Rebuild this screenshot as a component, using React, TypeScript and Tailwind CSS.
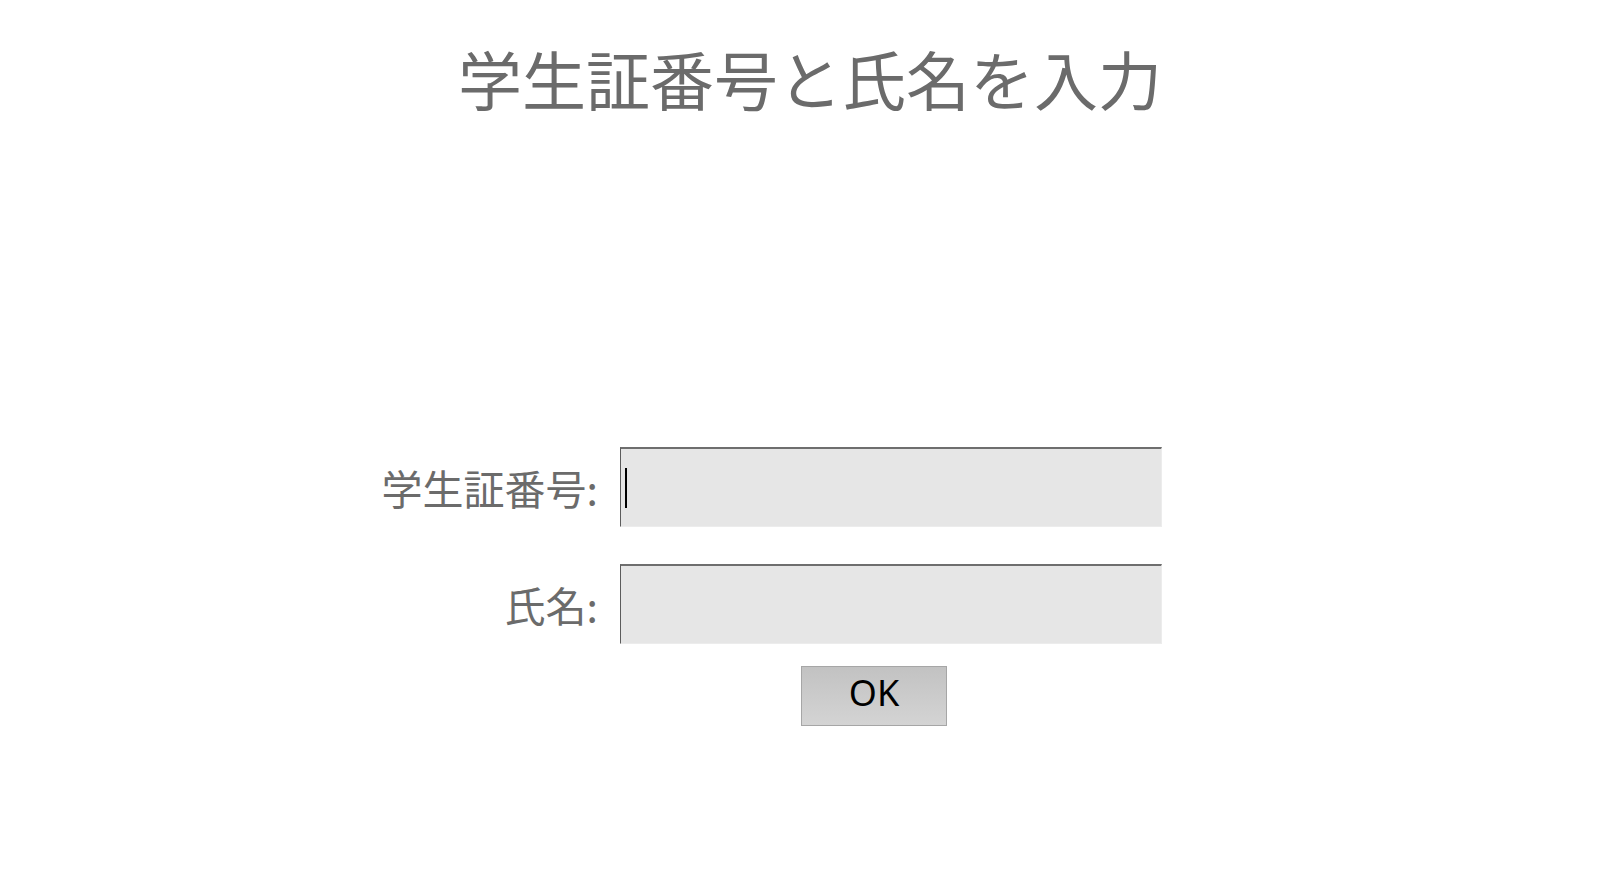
import React from 'react';

const jp = { fontFamily: '"Noto Sans CJK JP", "Noto Sans", sans-serif' };

const Field: React.FC<{ label: string; caret?: boolean }> = ({ label, caret }) => (
  <div className="flex items-center">
    <div className="w-[598px] text-right text-[41px] leading-none text-[#6b6b6b]" style={jp}>
      {label}
    </div>
    <div className="relative ml-[22px] h-[80px] w-[542px] bg-[#e6e6e6] border-t-2 border-t-[#6e6e6e] border-l border-l-[#5c5c5c] border-r border-r-[#ececec] border-b border-b-[#ececec]">
      {caret && <span className="absolute left-[4px] top-[19px] h-[40px] w-[2px] bg-black" />}
    </div>
  </div>
);

export default function App() {
  return (
    <div className="w-[1600px] h-[888px] bg-white overflow-hidden" style={jp}>
      <h1 className="pt-[45px] pl-[20px] text-center text-[64px] leading-none font-normal text-[#6b6b6b]">
        学生証番号と氏名を入力
      </h1>

      <div className="mt-[338px] flex flex-col gap-[37px]">
        <Field label="学生証番号:" caret />
        <Field label="氏名:" />
      </div>

      <div className="mt-[22px] pl-[801px]">
        <button
          className="flex h-[60px] w-[146px] items-center justify-center pb-[6px] border border-[#a6a6a6] bg-gradient-to-b from-[#c2c2c2] to-[#d4d4d4] text-[36px] leading-none text-black"
          style={{ fontFamily: '"Noto Sans", "Open Sans", sans-serif' }}
        >
          OK
        </button>
      </div>
    </div>
  );
}
